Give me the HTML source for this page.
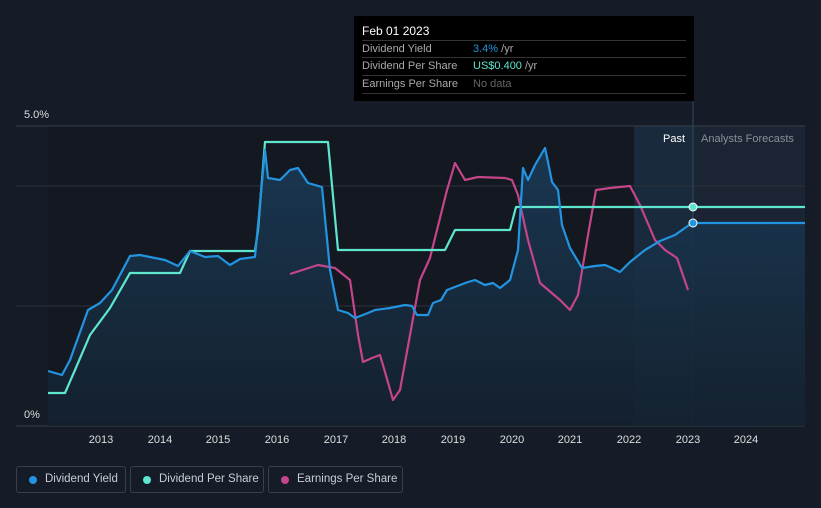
<!DOCTYPE html>
<html><head><style>
body{margin:0;background:#151b26;font-family:"Liberation Sans",sans-serif;}
.w{position:relative;width:821px;height:508px;overflow:hidden;background:#161c27}
.tt{position:absolute;left:354px;top:16px;width:340px;height:85px;background:#000;color:#fff;font-size:11px}
.tt .r{position:absolute;left:8px;width:324px;border-top:1px solid #333;height:17px;line-height:17px;color:#aaa}
.tt .r span{position:absolute;left:111px}
.lg{position:absolute;top:466px;height:27px;border:1px solid #3a404b;border-radius:3px;color:#c8ccd2;font-size:11.5px;line-height:25px;box-sizing:border-box;padding-left:28px;white-space:nowrap}
.lg i{position:absolute;left:12px;top:9px;width:8px;height:8px;border-radius:50%}
</style></head><body><div class="w">
<svg width="821" height="508" style="position:absolute;left:0;top:0">
<defs><linearGradient id="g" x1="0" y1="0" x2="0" y2="1"><stop offset="0" stop-color="#1a3a56"/><stop offset="1" stop-color="#14212f"/></linearGradient></defs>
<rect x="48" y="126" width="757" height="300" fill="#131821"/>
<rect x="634" y="126" width="59" height="300" fill="#182a3b"/>
<rect x="693" y="126" width="112" height="300" fill="#1a2433"/>
<line x1="16" y1="126" x2="805" y2="126" stroke="#3a404b"/>
<line x1="16" y1="186" x2="805" y2="186" stroke="#2c323d"/>
<line x1="16" y1="306" x2="805" y2="306" stroke="#2c323d"/>
<line x1="16" y1="426" x2="805" y2="426" stroke="#3a404b"/>
<line x1="693" y1="18" x2="693" y2="426" stroke="#2f4a63"/>
<path d="M48,371 L62,375 L70,360 L88,310 L100,303 L112,290 L130,256 L140,255 L165,260 L178,266 L190,251 L205,257 L218,256 L230,265 L240,259 L255,257 L265,150 L268,178 L280,180 L290,170 L298,168 L308,183 L322,187 L330,270 L338,310 L348,313 L355,318 L368,313 L375,310 L390,308 L405,305 L412,306 L417,315 L428,315 L433,303 L441,300 L447,290 L460,285 L468,282 L475,280 L485,285 L493,283 L500,288 L510,280 L518,250 L523,168 L528,180 L535,165 L545,148 L548,162 L552,182 L558,190 L562,225 L570,248 L582,268 L595,266 L605,265 L612,268 L620,272 L630,262 L645,250 L660,241 L675,235 L692,223 L805,223 L805,426 L48,426Z" fill="url(#g)" opacity="0.9"/>
<text x="101" y="443" fill="#ddd" font-size="11" text-anchor="middle">2013</text>
<text x="160" y="443" fill="#ddd" font-size="11" text-anchor="middle">2014</text>
<text x="218" y="443" fill="#ddd" font-size="11" text-anchor="middle">2015</text>
<text x="277" y="443" fill="#ddd" font-size="11" text-anchor="middle">2016</text>
<text x="336" y="443" fill="#ddd" font-size="11" text-anchor="middle">2017</text>
<text x="394" y="443" fill="#ddd" font-size="11" text-anchor="middle">2018</text>
<text x="453" y="443" fill="#ddd" font-size="11" text-anchor="middle">2019</text>
<text x="512" y="443" fill="#ddd" font-size="11" text-anchor="middle">2020</text>
<text x="570" y="443" fill="#ddd" font-size="11" text-anchor="middle">2021</text>
<text x="629" y="443" fill="#ddd" font-size="11" text-anchor="middle">2022</text>
<text x="688" y="443" fill="#ddd" font-size="11" text-anchor="middle">2023</text>
<text x="746" y="443" fill="#ddd" font-size="11" text-anchor="middle">2024</text>
<text x="24" y="118" fill="#ddd" font-size="11">5.0%</text>
<text x="24" y="418" fill="#ddd" font-size="11">0%</text>
<text x="685" y="142" fill="#fff" font-size="11" text-anchor="end">Past</text>
<text x="701" y="142" fill="#8a909a" font-size="11">Analysts Forecasts</text>
<path d="M290,274 L318,265 L335,268 L350,280 L358,335 L363,362 L372,358 L380,355 L385,372 L393,400 L400,390 L410,335 L420,280 L430,258 L440,218 L447,190 L455,163 L465,180 L478,177 L505,178 L512,180 L518,195 L528,240 L540,283 L560,300 L570,310 L578,295 L588,235 L596,190 L610,188 L630,186 L640,205 L655,240 L665,250 L677,258 L688,290" fill="none" stroke="#c5458a" stroke-width="2.2" stroke-linejoin="round"/>
<path d="M48,393 L65,393 L75,370 L90,335 L110,308 L130,273 L180,273 L190,251 L255,251 L258,230 L265,142 L328,142 L338,250 L445,250 L455,230 L510,230 L516,207 L805,207" fill="none" stroke="#5ee6cf" stroke-width="2.2" stroke-linejoin="round"/>
<path d="M48,371 L62,375 L70,360 L88,310 L100,303 L112,290 L130,256 L140,255 L165,260 L178,266 L190,251 L205,257 L218,256 L230,265 L240,259 L255,257 L265,150 L268,178 L280,180 L290,170 L298,168 L308,183 L322,187 L330,270 L338,310 L348,313 L355,318 L368,313 L375,310 L390,308 L405,305 L412,306 L417,315 L428,315 L433,303 L441,300 L447,290 L460,285 L468,282 L475,280 L485,285 L493,283 L500,288 L510,280 L518,250 L523,168 L528,180 L535,165 L545,148 L548,162 L552,182 L558,190 L562,225 L570,248 L582,268 L595,266 L605,265 L612,268 L620,272 L630,262 L645,250 L660,241 L675,235 L692,223 L805,223" fill="none" stroke="#2394e0" stroke-width="2.2" stroke-linejoin="round"/>
<circle cx="693" cy="207" r="4" fill="#5ee6cf" stroke="#fff" stroke-width="1"/>
<circle cx="693" cy="223" r="4" fill="#2394e0" stroke="#fff" stroke-width="1"/>
</svg>
<div class="tt">
<div style="position:absolute;left:8px;top:8px;color:#fff;font-size:12px">Feb 01 2023</div>
<div class="r" style="top:24px">Dividend Yield<span><b style="font-weight:normal;color:#2394e0">3.4%</b> /yr</span></div>
<div class="r" style="top:41px">Dividend Per Share<span><b style="font-weight:normal;color:#5ee6cf">US$0.400</b> /yr</span></div>
<div class="r" style="top:59px;border-bottom:1px solid #333">Earnings Per Share<span style="color:#666">No data</span></div>
</div>
<div class="lg" style="left:16px;width:110px"><i style="background:#2394e0"></i>Dividend Yield</div>
<div class="lg" style="left:130px;width:134px"><i style="background:#5ee6cf"></i>Dividend Per Share</div>
<div class="lg" style="left:268px;width:135px"><i style="background:#c5458a"></i>Earnings Per Share</div>
</div></body></html>
